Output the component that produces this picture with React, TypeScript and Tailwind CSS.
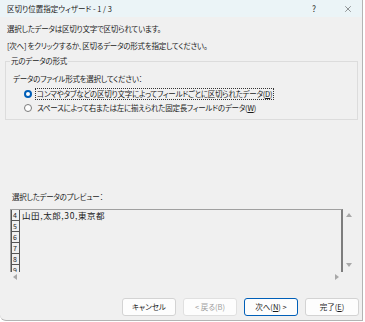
import { X } from "lucide-react";

const font = "font-['Noto_Sans_CJK_JP',sans-serif] [font-feature-settings:'palt']";

function Radio({ checked }: { checked: boolean }) {
  return checked ? (
    <span className="w-[8px] h-[8px] rounded-full border-[2px] border-[#005fb8] bg-white shrink-0" />
  ) : (
    <span className="w-[8px] h-[8px] rounded-full border border-[#7a7a7a] bg-white shrink-0" />
  );
}

function Arrow({ dir }: { dir: "up" | "down" | "left" | "right" }) {
  const pts = {
    up: "0,4 3,0 6,4",
    down: "0,0 3,4 6,0",
    left: "4,0 0,3 4,6",
    right: "0,0 4,3 0,6",
  }[dir];
  const vert = dir === "up" || dir === "down";
  return (
    <svg width={vert ? 6 : 4} height={vert ? 4 : 6} viewBox={vert ? "0 0 6 4" : "0 0 4 6"}>
      <polygon points={pts} fill="#a8a8a8" />
    </svg>
  );
}

function Btn({ label, variant }: { label: React.ReactNode; variant?: "disabled" | "focus" }) {
  const cls =
    variant === "focus"
      ? "border-[#005fb8] text-[#1b1b1b]"
      : variant === "disabled"
        ? "border-[#e0e0e0] text-[#9d9d9d]"
        : "border-[#d3d3d3] text-[#1b1b1b]";
  return (
    <div
      className={`w-[54px] h-[18px] rounded-[3px] border bg-[#fdfdfd] flex items-center justify-center text-[7.5px] leading-none ${cls}`}
    >
      {label}
    </div>
  );
}

const rows = ["4", "5", "6", "7", "8", "9"];

export default function App() {
  return (
    <div className={`w-[365px] h-[322px] bg-white ${font}`}>
      <div className="w-[363px] h-[321px] bg-[#f0f0f0] border-r border-b border-[#b4b4b4] rounded-bl-[6px] flex flex-col text-[#1b1b1b]">
        {/* title bar */}
        <div className="h-[17px] bg-[#ebf4f7] flex items-center pl-[7px] text-[7.5px] leading-none shrink-0">
          <span>区切り位置指定ウィザード - 1 / 3</span>
          <span className="ml-auto mr-[27px] text-[8.5px] text-[#333]">?</span>
          <X size={10} strokeWidth={1.2} className="mr-[9px] text-[#333]" />
        </div>

        <div className="flex flex-col pl-[5px] pr-[4px] text-[7.5px] tracking-[-0.25px] leading-[12px]">
          <p className="mt-[6px] pl-[2px]">選択したデータは区切り文字で区切られています。</p>
          <p className="mt-[5px] pl-[2px]">[次へ] をクリックするか、区切るデータの形式を指定してください。</p>

          <fieldset className="mt-[3px] border border-[#dcdcdc] pl-[6px] pb-[5px]">
            <legend className="ml-[-2px] px-[1px] leading-[12px]">元のデータの形式</legend>
            <p className="mt-[6px] pl-[1px]">データのファイル形式を選択してください：</p>
            <div className="mt-[3px] ml-[12px] flex items-center h-[12px]">
              <Radio checked />
              <span className="ml-[3px] px-[1px] border border-dotted border-[#333] leading-[10px]">
                コンマやタブなどの区切り文字によってフィールドごとに区切られたデータ(<span className="underline">D</span>)
              </span>
            </div>
            <div className="mt-[2px] ml-[12px] flex items-center h-[12px]">
              <Radio checked={false} />
              <span className="ml-[4px] px-[1px]">
                スペースによって右または左に揃えられた固定長フィールドのデータ(<span className="underline">W</span>)
              </span>
            </div>
          </fieldset>

          <p className="mt-[71px] pl-[7px]">選択したデータのプレビュー：</p>

          {/* preview */}
          <div className="mt-[6px] ml-[5px] flex flex-col w-[344px] tracking-normal">
            <div className="flex">
              <div className="w-[333px] h-[63px] border-t border-l border-[#a0a0a0] border-r-2 border-r-[#7d7d7d] overflow-hidden flex flex-col">
                {rows.map((r, i) => (
                  <div key={r} className="flex h-[11px] shrink-0">
                    <div className="w-[9px] border-l border-r border-b border-[#555] text-[7px] leading-[10px] pl-[1px] bg-[#f0f0f0]">
                      {r}
                    </div>
                    {i === 0 && (
                      <span className="ml-[2px] text-[8.5px] leading-[11px] tracking-[0.6px] [font-feature-settings:normal]">
                        山田,太郎,30,東京都
                      </span>
                    )}
                  </div>
                ))}
              </div>
              <div className="w-[11px] flex flex-col items-center justify-between pt-[4px] pb-[5px]">
                <Arrow dir="up" />
                <Arrow dir="down" />
              </div>
            </div>
            <div className="h-[10px] w-[333px] flex items-center justify-between pl-[3px] pr-[4px]">
              <Arrow dir="left" />
              <Arrow dir="right" />
            </div>
          </div>
        </div>

        {/* buttons */}
        <div className="mt-auto mb-[4px] flex justify-end gap-[7px] pr-[3px]">
          <Btn label="キャンセル" />
          <Btn label="< 戻る(B)" variant="disabled" />
          <Btn
            label={
              <>
                次へ(<span className="underline">N</span>) &gt;
              </>
            }
            variant="focus"
          />
          <Btn
            label={
              <>
                完了(<span className="underline">E</span>)
              </>
            }
          />
        </div>
      </div>
    </div>
  );
}
